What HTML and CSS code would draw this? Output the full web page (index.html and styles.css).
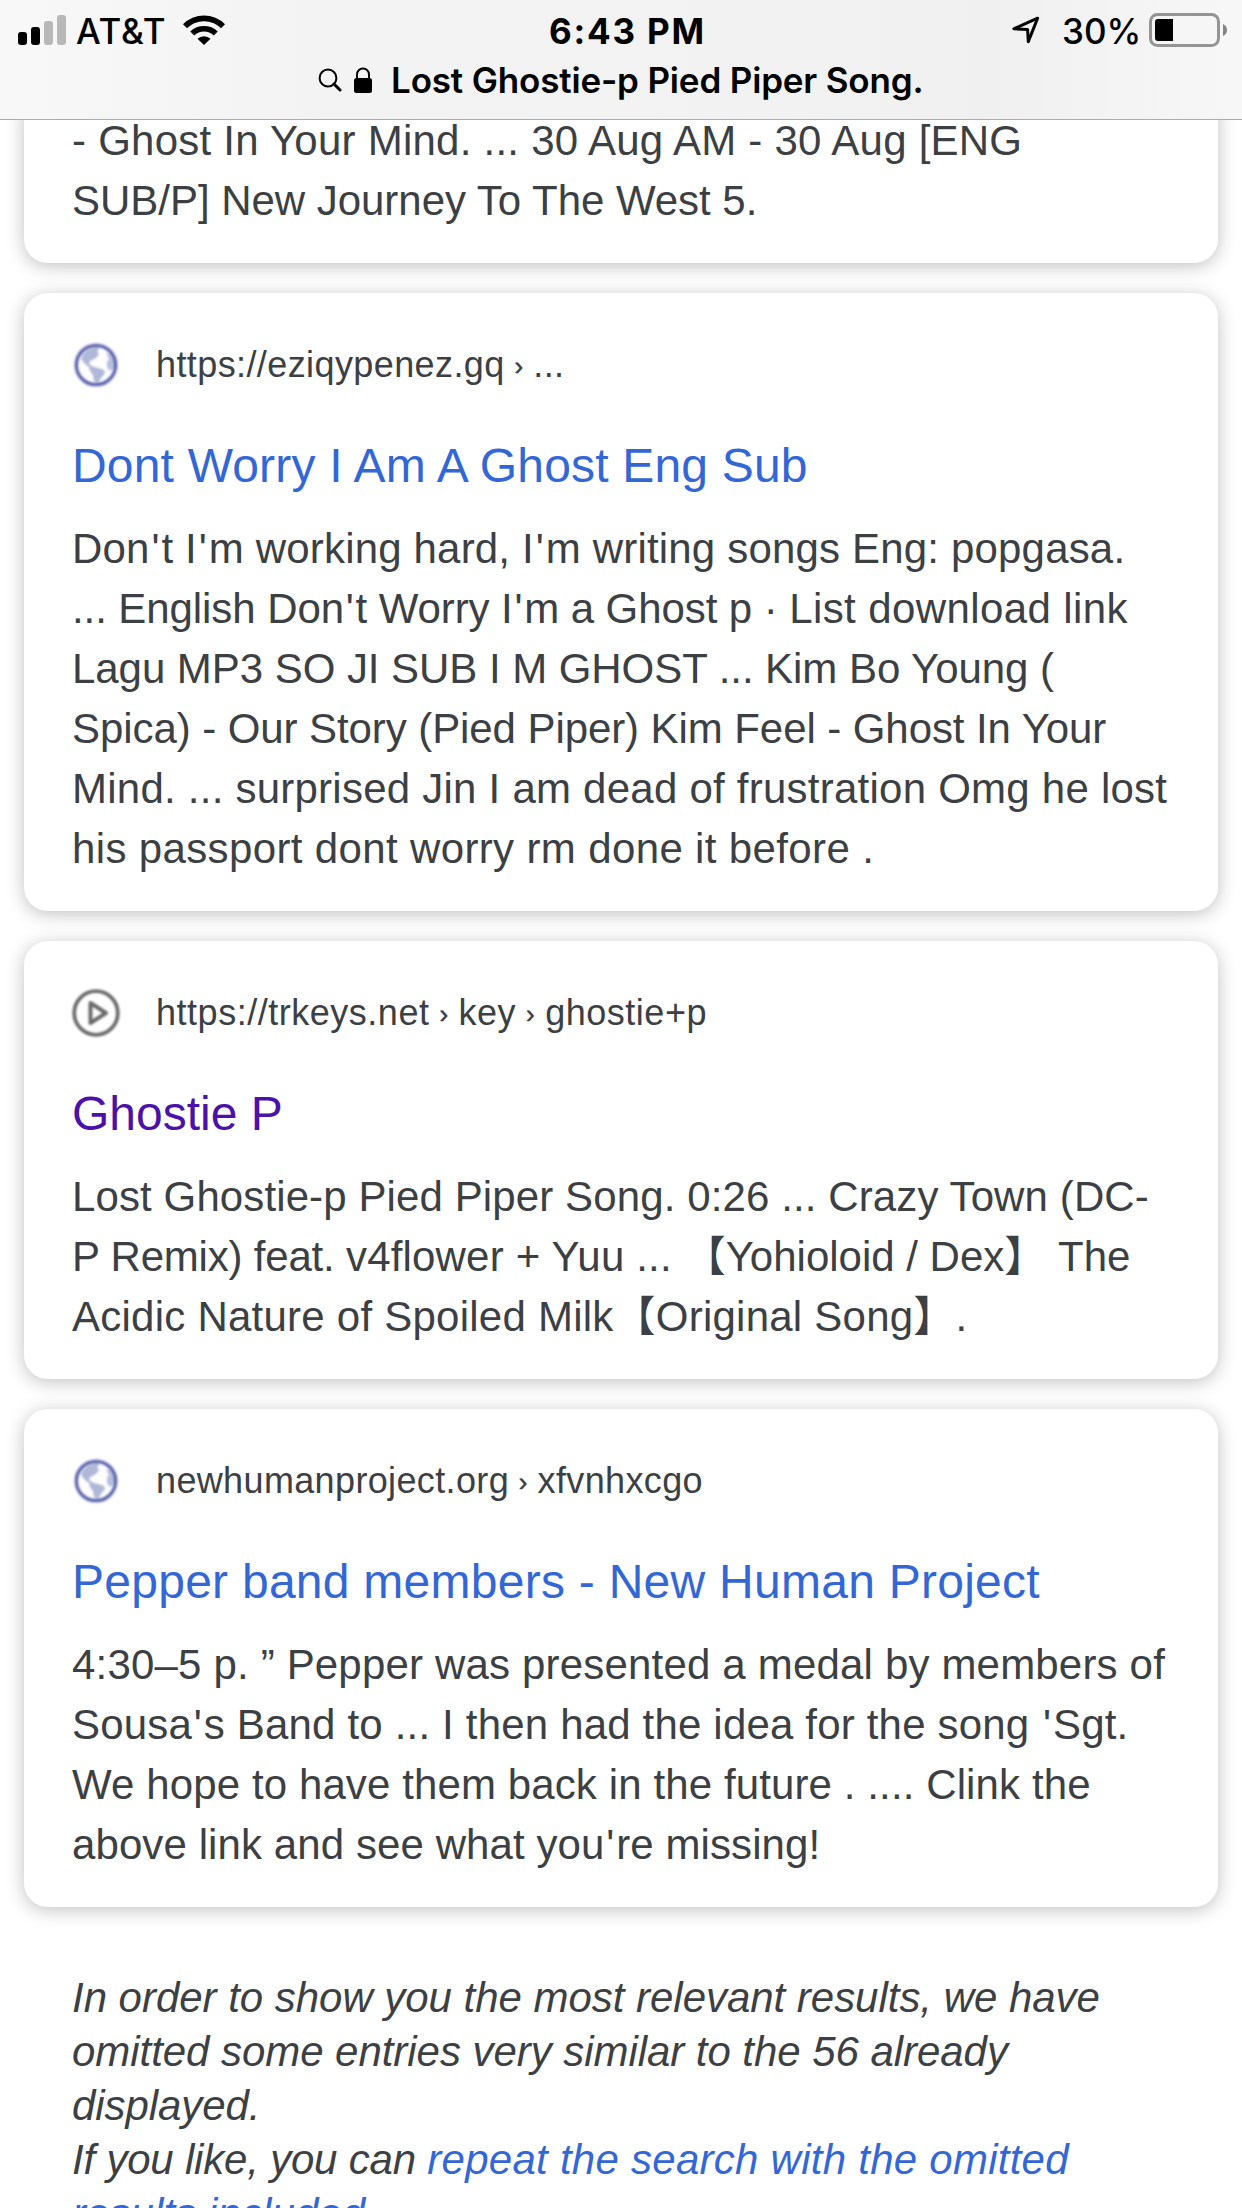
FILE: index.html
```html
<!DOCTYPE html>
<html lang="en">
<head>
<meta charset="utf-8">
<title>Lost Ghostie-p Pied Piper Song.</title>
<link rel="stylesheet" href="styles.css">
</head>
<body>
<svg width="0" height="0" class="defs" aria-hidden="true">
  <symbol id="globe" viewBox="0 0 48 48">
    <circle cx="24" cy="24" r="20" fill="#fdfdff" stroke="#dcddf0" stroke-width="5"/>
    <path d="M11 13 L17 8 L24 6 L28 7 L25 10 L27 13 L24 17 L20 19 L17 21 L18 24 L22 26 L26 27 L32 29 L33 32 L29 37 L26 42 L22 40 L21 34 L18 30 L17 26 L13 23 L9 18 Z" fill="#b0b8d8"/>
    <path d="M34 12 L39 14 L42 21 L42 27 L38 30 L35 26 L35 21 L37 18 Z" fill="#b8bfdc"/>
    <circle cx="24" cy="24" r="19.6" fill="none" stroke="#5a63aa" stroke-width="3"/>
  </symbol>
</svg>
<header class="browser-bar">
  <div class="status">
    <svg class="signal" viewBox="0 0 48 30">
      <rect x="0" y="17" width="9" height="13" rx="3"/><rect x="13" y="12" width="9" height="18" rx="3"/>
      <rect x="26" y="6" width="9" height="24" rx="3" fill="#b8b8b8"/><rect x="39" y="0" width="9" height="30" rx="3" fill="#b8b8b8"/>
    </svg>
    <span class="carrier">AT&amp;T</span>
    <svg class="wifi" viewBox="0 0 42 30">
      <path d="M0 9.2 A29.5 29.5 0 0 1 42 9.2 L38 13.2 A24 24 0 0 0 4 13.2 Z"/>
      <path d="M7.3 16.5 A19.5 19.5 0 0 1 34.7 16.5 L30.8 20.4 A14 14 0 0 0 11.2 20.4 Z"/>
      <path d="M14.5 23.8 A9.3 9.3 0 0 1 27.5 23.8 L21 30 Z"/>
    </svg>
    <span class="time">6:43 PM</span>
    <svg class="location" viewBox="0 0 28 28"><path d="M1.8 12.8 L25.6 2.2 L16.3 25.6 L15.6 13.4 Z" fill="none" stroke="#000" stroke-width="3" stroke-linejoin="round"/></svg>
    <span class="charge">30%</span>
    <svg class="battery" viewBox="0 0 78 34">
      <rect x="1.5" y="1.5" width="68" height="31" rx="7" fill="none" stroke="#949494" stroke-width="3"/>
      <path d="M9 6 H24 V28 H9 Q6 28 6 25 V9 Q6 6 9 6 Z"/><path d="M74 11 Q78 13 78 17 Q78 21 74 23 Z" fill="#848484"/>
    </svg>
  </div>
  <div class="address">
    <svg class="search" viewBox="0 0 24 24"><circle cx="10" cy="10" r="8.4" fill="none" stroke="#000" stroke-width="2"/><path d="M16 16 L22 22" stroke="#000" stroke-width="3" stroke-linecap="round"/></svg>
    <svg class="lock" viewBox="0 0 18 26"><rect x="0" y="11" width="18" height="15" rx="2.5"/><path d="M3 12 V7.5 a6 6 0 0 1 12 0 V12" fill="none" stroke="#000" stroke-width="2"/></svg>
    <span class="query">Lost Ghostie-p Pied Piper Song.</span>
  </div>
</header>
<main class="results">
  <article class="card card-cut">
    <p class="snippet"><span class="ln k24">- Ghost In Your Mind. ... 30 Aug AM - 30 Aug [ENG</span><span class="ln k00">SUB/P] New Journey To The West 5.</span></p>
  </article>
  <article class="card">
    <div class="source"><svg class="favicon"><use href="#globe"/></svg><span class="k40">https://eziqypenez.gq <i class="sep">›</i> ...</span></div>
    <h3 class="title k18">Dont Worry I Am A Ghost Eng Sub</h3>
    <p class="snippet"><span class="ln k18">Don<i class="ap">'</i>t I<i class="ap">'</i>m working hard, I<i class="ap">'</i>m writing songs Eng: popgasa.</span><span class="ln k-08">... English Don<i class="ap">'</i>t Worry I<i class="ap">'</i>m a Ghost p · <span class="k40">List download link</span></span><span class="ln k-05">Lagu MP3 SO JI SUB I M GHOST ... Kim Bo Young (</span><span class="ln k-08">Spica) - Our Story (Pied Piper) Kim Feel - Ghost In Your</span><span class="ln k24">Mind. ... surprised Jin I am dead of frustration Omg he lost</span><span class="ln k36">his passport dont worry rm done it before .</span></p>
  </article>
  <article class="card">
    <div class="source">
      <svg class="favicon" viewBox="0 0 48 48" fill="none" stroke="#6c6c6c"><circle cx="24" cy="24" r="21.8" stroke-width="3.8"/><path d="M18.5 14 V34 L34 24 Z" stroke-width="4" stroke-linejoin="round"/></svg>
      <span class="k52">https://trkeys.net <i class="sep">›</i> key <i class="sep">›</i> ghostie+p</span>
    </div>
    <h3 class="title visited">Ghostie P</h3>
    <p class="snippet"><span class="ln k11">Lost Ghostie-p Pied Piper Song. 0:26 ... Crazy Town (DC-</span><span class="ln"><span class="k-17">P Remix) feat. </span><span class="k18">v4flower + Yuu ... </span>【Yohioloid / Dex】 The</span><span class="ln k24">Acidic Nature of Spoiled Milk【Original Song】.</span></p>
  </article>
  <article class="card">
    <div class="source"><svg class="favicon"><use href="#globe"/></svg><span class="k36">newhumanproject.org <i class="sep">›</i> xfvnhxcgo</span></div>
    <h3 class="title k26">Pepper band members - New Human Project</h3>
    <p class="snippet"><span class="ln k18">4:30–5 p. ” Pepper was presented a medal by members of</span><span class="ln k18">Sousa<i class="ap">'</i>s Band to ... I then had the idea for the song <i class="ap">'</i>Sgt.</span><span class="ln k11">We hope to have them back in the future . .... Clink the</span><span class="ln k09">above link and see what you<i class="ap">'</i>re missing!</span></p>
  </article>
  <p class="omitted"><span class="ln k00">In order to show you the most relevant results, we have</span><span class="ln k-05">omitted some entries very similar to the 56 already</span><span class="ln k-08">displayed.</span><span class="ln k-17">If you like, you can <a class="k26">repeat the search with the omitted</a></span><span class="ln"><a class="k09">results included</a>.</span></p>
</main>
</body>
</html>
```
FILE: styles.css
```css
* { box-sizing: border-box; }
html { height: 2208px; overflow: hidden; }
body {
  margin: 0;
  width: 1242px;
  height: 2208px;
  overflow: hidden;
  background: #fff;
  color: #3c4043;
  font-family: "Liberation Sans", "Noto Sans CJK JP", sans-serif;
}
svg { display: block; flex: none; }
.defs { position: absolute; }

/* status bar and collapsed address bar */
.browser-bar {
  position: relative;
  z-index: 1;
  height: 120px;
  padding: 10px 15px 0 18px;
  border-bottom: 1px solid #acacac;
  background: linear-gradient(90deg, #f8f8f8, #f3f3f3 25%, #f2f2f2 65%, #f0f0f0 80%, #f7f7f7);
  color: #000;
  font: 600 35px/42px Inter, "Liberation Sans", sans-serif;
}
.status, .address { display: flex; height: 42px; white-space: nowrap; }
.status { align-items: flex-start; }
.signal { width: 48px; height: 30px; margin-top: 5px; }
.carrier { width: 107px; margin-left: 10px; font-weight: 500; letter-spacing: .8px; }
.wifi { width: 42px; height: 30px; margin-top: 5px; }
.time { width: 463px; margin-left: 324px; font-weight: 700; letter-spacing: 1.8px; }
.location { width: 28px; height: 28px; margin-top: 6px; }
.charge { width: 87px; margin-left: 22px; font-weight: 500; }
.battery { width: 78px; height: 34px; margin-top: 3px; }
.address { margin-top: 7px; padding-left: 300px; }
.search { width: 24px; height: 24px; margin-top: 9px; }
.lock { width: 18px; height: 26px; margin: 8px 0 0 12px; }
.query { margin-left: 19px; letter-spacing: -.16px; }

/* result cards */
.results { display: flex; flex-direction: column; gap: 30px; margin-top: -30px; padding: 0 24px; }
.card {
  padding: 48px 48px 32px;
  border-radius: 24px;
  background: #fff;
  box-shadow: 0 3px 18px rgba(32, 33, 36, .28);
}
.card-cut { padding-top: 21px; }
.source { display: flex; align-items: center; gap: 36px; height: 48px; font-size: 36px; line-height: 48px; white-space: nowrap; }
.favicon { width: 48px; height: 48px; filter: blur(.8px); }
.sep { margin: 0 -.6px; font-size: 26px; font-style: normal; line-height: 0; vertical-align: 2px; -webkit-text-stroke: .5px; }
.title { margin: 50px 0 26px; color: #3367d6; font-size: 48px; font-weight: 400; line-height: 54px; white-space: nowrap; }
.visited { color: #4b11a8; }
.snippet, .omitted { margin: 0; font-size: 42px; line-height: 60px; }
.omitted { margin-top: 34px; padding: 0 48px; font-style: italic; line-height: 54px; }
.omitted a { color: #3367d6; }
.ln { display: block; white-space: nowrap; }
.ap { margin: 0 1.8px; font-style: normal; }

/* tracking steps */
.k-17 { letter-spacing: -.2px; }
.k-08 { letter-spacing: -.08px; }
.k-05 { letter-spacing: -.05px; }
.k00 { letter-spacing: -.03px; }
.k09 { letter-spacing: .09px; }
.k11 { letter-spacing: .11px; }
.k18 { letter-spacing: .18px; }
.k24 { letter-spacing: .24px; }
.k26 { letter-spacing: .26px; }
.k36 { letter-spacing: .36px; }
.k40 { letter-spacing: .4px; }
.k52 { letter-spacing: .52px; }
```
